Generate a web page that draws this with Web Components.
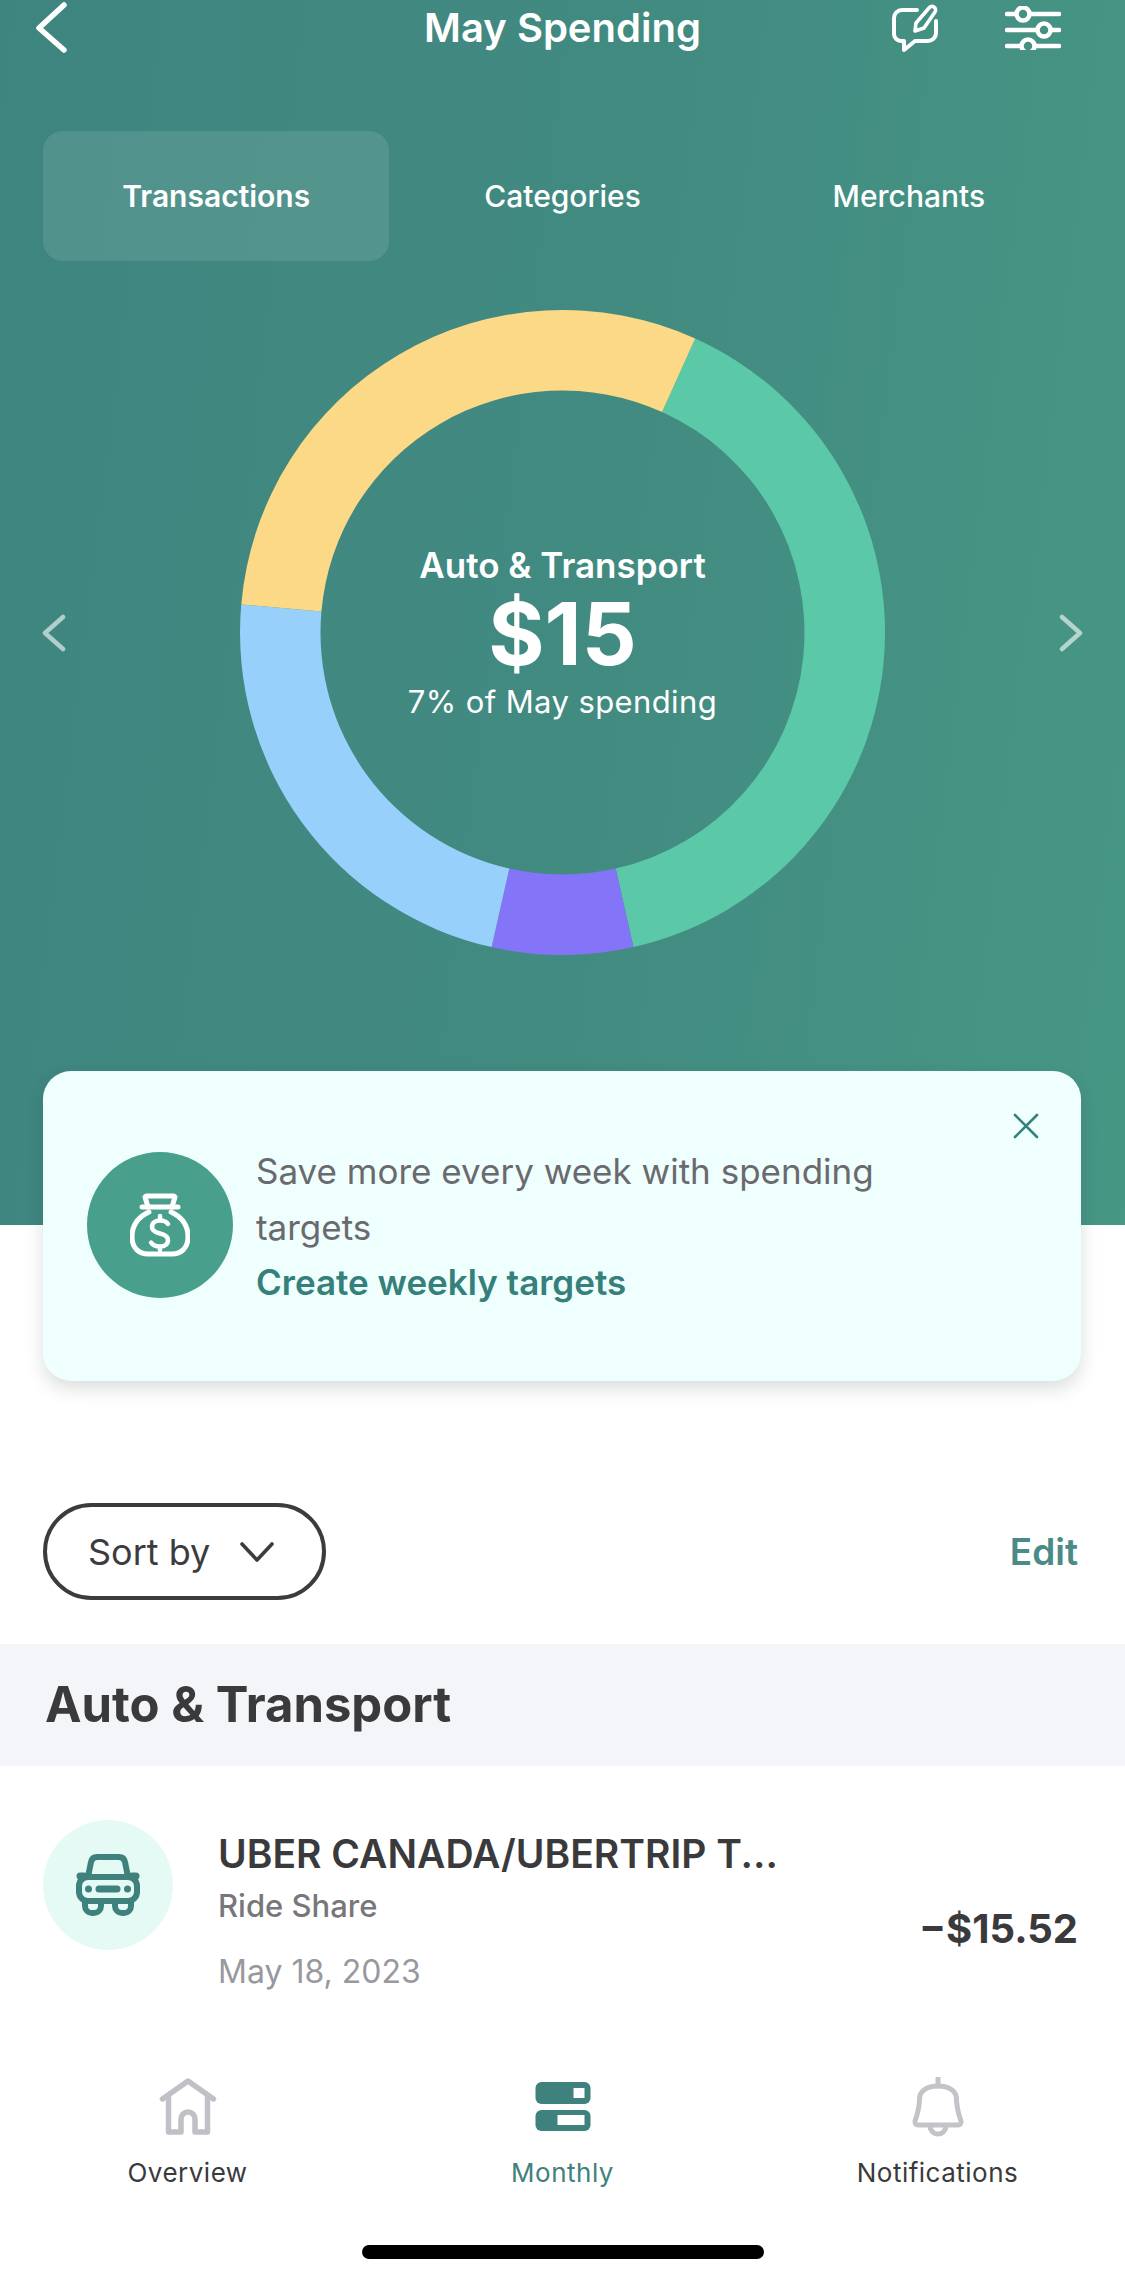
<!DOCTYPE html>
<html>
<head>
<meta charset="utf-8">
<title>May Spending</title>
<style>
    html, body { margin: 0; padding: 0; background: white; }
    body { width: 1125px; height: 2283px; overflow: hidden; font-family: Inter, "Liberation Sans", sans-serif; }
</style>
</head>
<body>
<spending-screen>
    <spending-hero slot="hero" title="May Spending">
        <tab-item active>Transactions</tab-item>
        <tab-item>Categories</tab-item>
        <tab-item>Merchants</tab-item>
        <spending-donut slot="chart" label="Auto &amp; Transport" amount="$15" note="7% of May spending"></spending-donut>
    </spending-hero>
    <target-card slot="card" link="Create weekly targets">Save more every week with spending targets</target-card>
    <sort-bar slot="list"></sort-bar>
    <section-title slot="list">Auto &amp; Transport</section-title>
    <txn-row slot="list" name="UBER CANADA/UBERTRIP T..." kind="Ride Share" date="May 18, 2023" amount="−$15.52"></txn-row>
    <bottom-nav slot="nav">
        <nav-item label="Overview" icon="home"></nav-item>
        <nav-item label="Monthly" icon="monthly" active></nav-item>
        <nav-item label="Notifications" icon="bell"></nav-item>
    </bottom-nav>
</spending-screen>

<script>
function define(name, html, setup) {
    const template = document.createElement('template');
    template.innerHTML = html;
    customElements.define(name, class extends HTMLElement {
        constructor() {
            super();
            this.attachShadow({mode: 'open'});
            this.shadowRoot.appendChild(template.content.cloneNode(true));
        }
        connectedCallback() {
            this.shadowRoot.querySelectorAll('[data-attr]').forEach(el => {
                el.textContent = this.getAttribute(el.dataset.attr);
            });
            if (setup) setup(this, this.shadowRoot);
        }
    });
}

define('spending-screen', `
<style>
    :host { display: flex; flex-direction: column; width: 1125px; height: 2283px; background: white; }
    .list { display: block; margin-top: 122px; }
    .nav { display: block; margin-top: auto; }
</style>
<slot name="hero"></slot>
<slot name="card"></slot>
<div class="list"><slot name="list"></slot></div>
<div class="nav"><slot name="nav"></slot></div>
`);

define('spending-hero', `
<style>
    :host {
        display: block;
        height: 1225px;
        color: white;
        background: linear-gradient(97deg, #3e857f 0%, #428b81 55%, #479785 100%);
    }
    .top {
        display: grid;
        grid-template-columns: 1fr auto 1fr;
        align-items: center;
        height: 56px;
    }
    .back { display: block; margin-left: 33px; }
    h1 { margin: 0; font: 600 40px/56px Inter, sans-serif; }
    .actions { display: flex; justify-content: flex-end; align-items: center; gap: 66px; padding-right: 64px; }
    .actions svg { display: block; }
    .tabs {
        display: grid;
        grid-template-columns: repeat(3, 1fr);
        margin: 75px 43px 0;
    }
    .chart {
        display: flex;
        align-items: center;
        justify-content: space-between;
        margin-top: 49px;
        padding: 0 41px;
    }
    .side { display: block; }
</style>
<div class="top">
    <svg class="back" width="36" height="56" viewBox="0 0 36 56">
        <path d="M31 5 L6 28 L31 50" fill="none" stroke="white" stroke-width="5.5" stroke-linecap="round" stroke-linejoin="round"/>
    </svg>
    <h1 data-attr="title"></h1>
    <div class="actions">
        <svg width="48" height="48" viewBox="0 0 48 48" fill="none" stroke="white" stroke-width="4" stroke-linecap="round" stroke-linejoin="round">
            <path d="M26 6 H11 a8 8 0 0 0 -8 8 V30 a7 7 0 0 0 7 7 h3 V46 L24 37 H37 a8 8 0 0 0 8 -8 V17"/>
            <path d="M38 4 a3.6 3.6 0 0 1 6 4 L33 24 L24 27 L25 19 Z" stroke-width="3.6"/>
        </svg>
        <svg width="56" height="44" viewBox="0 0 56 44" fill="none" stroke="white" stroke-width="4.5" stroke-linecap="round">
            <path d="M2 8 H11 M25 8 H54 M2 24 H32 M46 24 H54 M2 40 H16 M30 40 H54"/>
            <circle cx="18" cy="8" r="6.5"/><circle cx="39" cy="24" r="6.5"/><circle cx="23" cy="40" r="6.5"/>
        </svg>
    </div>
</div>
<div class="tabs"><slot></slot></div>
<div class="chart">
    <svg class="side" width="26" height="38" viewBox="0 0 26 38">
        <path d="M22 3 L4 19 L22 35" fill="none" stroke="white" stroke-opacity=".6" stroke-width="4.5" stroke-linecap="round" stroke-linejoin="round"/>
    </svg>
    <slot name="chart"></slot>
    <svg class="side" width="26" height="38" viewBox="0 0 26 38">
        <path d="M4 3 L22 19 L4 35" fill="none" stroke="white" stroke-opacity=".6" stroke-width="4.5" stroke-linecap="round" stroke-linejoin="round"/>
    </svg>
</div>
`);

define('tab-item', `
<style>
    :host {
        display: flex;
        align-items: center;
        justify-content: center;
        height: 130px;
        border-radius: 20px;
        font: 500 30px/36px Inter, sans-serif;
        color: white;
    }
    :host([active]) {
        background: rgba(255, 255, 255, .1);
        font-weight: 600;
    }
</style>
<slot></slot>
`);

define('spending-donut', `
<style>
    :host {
        display: grid;
        width: 645px;
        height: 645px;
        color: white;
        text-align: center;
    }
    svg, .center { grid-area: 1 / 1; }
    svg { display: block; }
    .center {
        display: flex;
        flex-direction: column;
        justify-content: center;
        align-items: center;
    }
    .label { font: 600 35px/42px Inter, sans-serif; }
    .amount { font: 700 86px/96px Inter, sans-serif; }
    .note { font: 400 31px/40px Inter, sans-serif; letter-spacing: .4px; }
</style>
<svg width="645" height="645" viewBox="0 0 645 645"></svg>
<div class="center">
    <div class="label" data-attr="label"></div>
    <div class="amount" data-attr="amount"></div>
    <div class="note" data-attr="note"></div>
</div>
`, (host, root) => {
    // start and end angle in degrees, clockwise from 12 o'clock
    const segments = [
        [24.3, 167.3, '#5bc9a8'],
        [167.3, 192.7, '#8474f8'],
        [192.7, 275, '#96d0fb'],
        [275, 384.3, '#fbd986'],
    ];
    const point = (r, deg) => {
        const a = deg * Math.PI / 180;
        return (322.5 + r * Math.sin(a)).toFixed(2) + ' ' + (322.5 - r * Math.cos(a)).toFixed(2);
    };
    const outer = 322.5, inner = 242;
    root.querySelector('svg').innerHTML = segments.map(([from, to, color]) => {
        const big = to - from > 180 ? 1 : 0;
        return `<path fill="${color}" d="M${point(outer, from)} A${outer} ${outer} 0 ${big} 1 ${point(outer, to)} L${point(inner, to)} A${inner} ${inner} 0 ${big} 0 ${point(inner, from)} Z"/>`;
    }).join('');
});

define('target-card', `
<style>
    :host {
        display: flex;
        position: relative;
        box-sizing: border-box;
        align-items: flex-start;
        width: 1038px;
        height: 310px;
        margin: -154px 0 0 43px;
        padding: 81px 0 0 44px;
        border-radius: 28px;
        background: #eefffe;
        box-shadow: 0 8px 18px rgba(40, 50, 50, .16);
        font: 400 35px/55.5px Inter, sans-serif;
        color: #6a6a6e;
    }
    .coin {
        display: flex;
        flex: none;
        align-items: center;
        justify-content: center;
        width: 146px;
        height: 146px;
        border-radius: 50%;
        background: #48a08c;
    }
    .text { width: 720px; margin: -8px 0 0 23px; }
    .link { font-weight: 600; color: #35807a; }
    .close { position: absolute; top: 42px; right: 42px; display: block; }
</style>
<div class="coin">
    <svg width="60" height="64" viewBox="0 0 60 64" fill="none" stroke="white" stroke-width="5" stroke-linecap="round" stroke-linejoin="round">
        <path d="M18 14 L15 4 a1.5 1.5 0 0 1 1.5 -1 H43.5 a1.5 1.5 0 0 1 1.5 1 L42 14"/>
        <path d="M12 14 H48"/>
        <path d="M19 19 C8 24 2 33 2 44 C2 55 9 61 18 61 H42 C51 61 58 55 58 44 C58 33 52 24 41 19"/>
        <path d="M38 31 C36 28 33 27.5 30 27.5 C25 27.500 22 30 22 34 C22 38 26 39.500 30 40.500 C34 41.500 38 43 38 47 C38 51 35 53.500 30 53.500 C26 53.500 23 52.500 21 49.500 M30 23 V27 M30 54 V57" stroke-width="4.500"/>
    </svg>
</div>
<div class="text">
    <slot></slot>
    <div class="link" data-attr="link"></div>
</div>
<svg class="close" width="26" height="26" viewBox="0 0 26 26">
    <path d="M2 2 L24 24 M24 2 L2 24" stroke="#35807a" stroke-width="2.6" stroke-linecap="round"/>
</svg>
`);

define('sort-bar', `
<style>
    :host {
        display: flex;
        align-items: center;
        justify-content: space-between;
        height: 97px;
        padding: 0 47px 0 43px;
        margin-bottom: 44px;
    }
    .pill {
        display: flex;
        box-sizing: border-box;
        align-items: center;
        gap: 30px;
        width: 283px;
        height: 97px;
        padding-left: 41px;
        border: 4.5px solid #3c3c3e;
        border-radius: 49px;
        font: 400 36px/44px Inter, sans-serif;
        color: #3c3c3e;
    }
    .edit { font: 600 37px/44px Inter, sans-serif; color: #4a8b87; }
</style>
<div class="pill">
    <span>Sort by</span>
    <svg width="34" height="22" viewBox="0 0 34 22">
        <path d="M2 3 L17 19 L32 3" fill="none" stroke="#3c3c3e" stroke-width="3.600" stroke-linecap="round" stroke-linejoin="round"/>
    </svg>
</div>
<div class="edit">Edit</div>
`);

define('section-title', `
<style>
    :host {
        display: flex;
        align-items: center;
        height: 122px;
        padding-left: 45px;
        background: #f4f5f9;
        font: 700 49px/60px Inter, sans-serif;
        color: #3a3a3c;
    }
</style>
<slot></slot>
`);

define('txn-row', `
<style>
    :host {
        display: flex;
        position: relative;
        align-items: flex-start;
        padding: 54px 47px 0 43px;
    }
    .icon {
        display: flex;
        flex: none;
        align-items: center;
        justify-content: center;
        width: 130px;
        height: 130px;
        border-radius: 50%;
        background: #e6faf5;
    }
    .info { flex: 1; margin: 0 0 0 45px; }
    .name { font: 600 39px/50px Inter, sans-serif; color: #3a3a3c; margin-top: 9px; }
    .kind { font: 500 31px/40px Inter, sans-serif; color: #77777b; margin-top: 7px; }
    .date { font: 400 32px/40px Inter, sans-serif; color: #98989d; margin-top: 26px; }
    .amount { font: 700 40px/50px Inter, sans-serif; color: #3a3a3c; margin-top: 84px; }
</style>
<div class="icon">
    <svg width="66" height="62" viewBox="0 0 66 62">
        <g fill="none" stroke="#3f817d" stroke-width="6" stroke-linejoin="round" stroke-linecap="round">
            <path d="M13 23 L16 8 Q17 3 22 3 H44 Q49 3 50 8 L53 23"/>
            <rect x="4" y="23" width="58" height="24" rx="9"/>
            <path d="M10 48 V52 a7 7 0 0 0 7 7 h2 a7 7 0 0 0 7 -7 V48 M40 48 V52 a7 7 0 0 0 7 7 h2 a7 7 0 0 0 7 -7 V48"/>
            <path d="M9 22 H5 M57 22 H61" stroke-width="7"/>
            <path d="M24 35 H42" stroke-width="7"/>
        </g>
        <circle cx="13.500" cy="35" r="3.500" fill="#3f817d"/>
        <circle cx="52.500" cy="35" r="3.500" fill="#3f817d"/>
    </svg>
</div>
<div class="info">
    <div class="name" data-attr="name"></div>
    <div class="kind" data-attr="kind"></div>
    <div class="date" data-attr="date"></div>
</div>
<div class="amount" data-attr="amount"></div>
`);

define('bottom-nav', `
<style>
    :host { display: block; height: 206px; }
    .items { display: grid; grid-template-columns: repeat(3, 1fr); }
    .indicator { width: 402px; height: 14px; margin: 54px auto 0; border-radius: 7px; background: black; }
</style>
<div class="items"><slot></slot></div>
<div class="indicator"></div>
`);

const navIcons = {
    home: `<svg width="60" height="60" viewBox="0 0 60 60" fill="none" stroke="#bfc1c7" stroke-width="5.500" stroke-linejoin="round" stroke-linecap="round">
        <path d="M4.500 22 L30 4 L55.500 22 M10.500 18 V55 H23 V42 a7 7 0 0 1 14 0 V55 H49.500 V18"/>
    </svg>`,
    monthly: `<svg width="60" height="60" viewBox="0 0 60 60">
        <rect x="2.500" y="5" width="55" height="22" rx="6" fill="#3f817d"/>
        <rect x="40.500" y="11" width="11" height="10" fill="white"/>
        <rect x="2.500" y="33" width="55" height="21" rx="6" fill="#3f817d"/>
        <rect x="24.500" y="38" width="27" height="10" fill="white"/>
    </svg>`,
    bell: `<svg width="60" height="60" viewBox="0 0 60 60" fill="none" stroke="#c3c4c8" stroke-width="5" stroke-linejoin="round" stroke-linecap="round">
        <path d="M30 1 V9"/>
        <path d="M9 38 C11 30 11.500 27 11.500 22 C11.500 14 19 9 30 9 C41 9 48.500 14 48.500 22 C48.500 27 49 30 51 38 L53 44 C53.500 47 52 48 50 48 H10 C8 48 6.500 47 7 44 Z"/>
        <path d="M22 49 a8 8 0 0 0 16 0"/>
    </svg>`,
};

define('nav-item', `
<style>
    :host {
        display: flex;
        flex-direction: column;
        align-items: center;
        font: 400 26px/36px Inter, sans-serif;
        letter-spacing: .5px;
        color: #3a3a3c;
    }
    :host([active]) { color: #3f817d; }
    .icon { display: block; height: 60px; }
    .icon svg { display: block; }
    .label { margin-top: 18px; }
</style>
<div class="icon"></div>
<div class="label" data-attr="label"></div>
`, (host, root) => {
    root.querySelector('.icon').innerHTML = navIcons[host.getAttribute('icon')];
});
</script>
</body>
</html>
